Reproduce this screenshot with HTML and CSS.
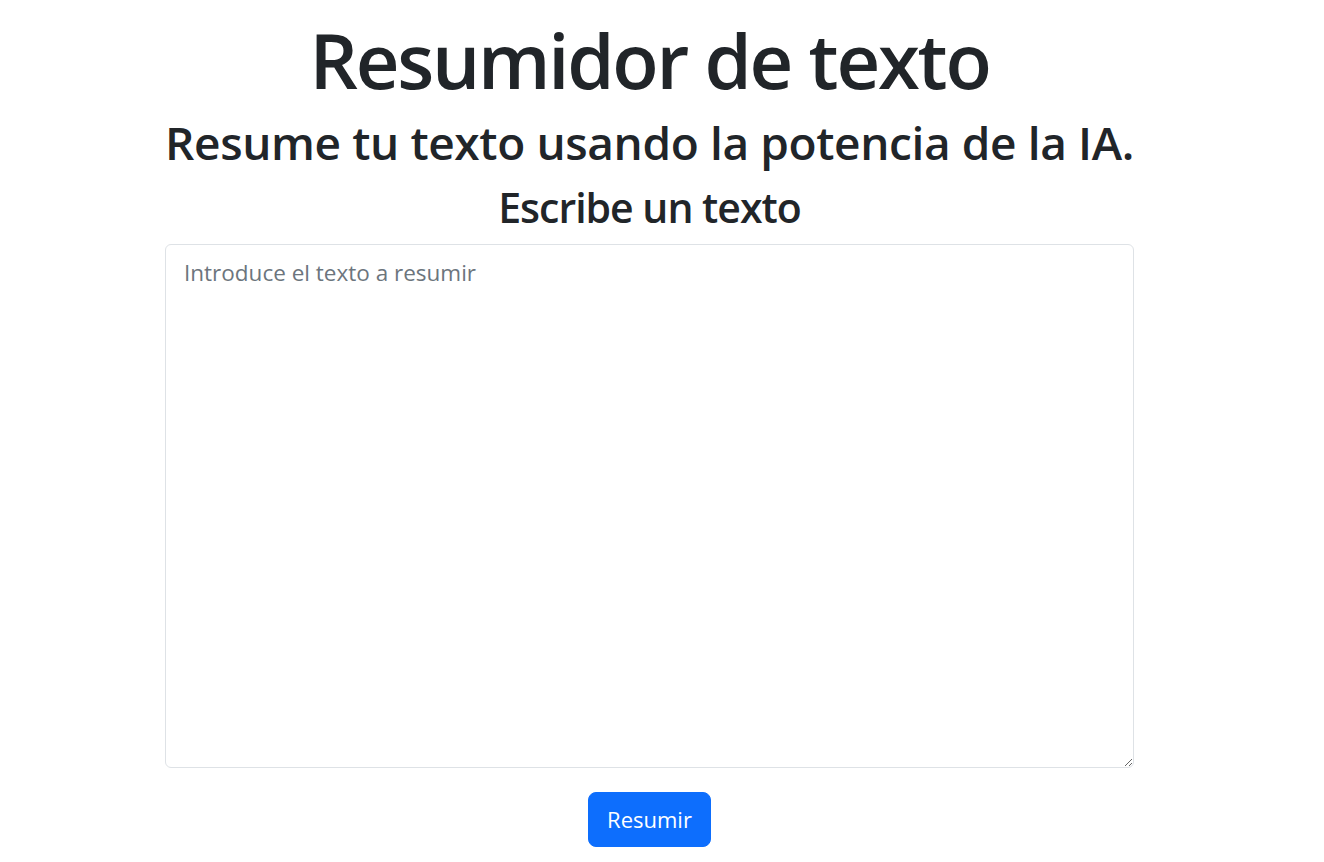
FILE: index.html
```html
<!DOCTYPE html>
<html lang="es">
<head>
<meta charset="utf-8">
<title>Resumidor de texto</title>
<link rel="stylesheet" href="styles.css">
</head>
<body>
<main class="page">
  <h1 class="title">Resumidor de texto</h1>
  <h2 class="subtitle">Resume tu texto usando la potencia de la IA.</h2>
  <form class="form">
    <label class="label" for="texto">Escribe un texto</label>
    <textarea id="texto" class="textarea" placeholder="Introduce el texto a resumir"></textarea>
    <button type="button" class="btn">Resumir</button>
  </form>
</main>
</body>
</html>
```

FILE: styles.css
```css
* { box-sizing: border-box; }
html, body { margin: 0; padding: 0; background: #fff; }
body {
  font-family: "Open Sans", "Noto Sans", sans-serif;
  color: #212529;
}
.page {
  width: 969px;
  margin-left: 165px;
  display: flex;
  flex-direction: column;
  align-items: center;
  padding-top: 12px;
}
.title {
  margin: 0 0 6px;
  font-size: 76px;
  font-weight: 600;
  letter-spacing: -2.25px;
  line-height: 96px;
  white-space: nowrap;
}
.subtitle {
  margin: 0 0 11px;
  font-size: 46px;
  font-weight: 600;
  letter-spacing: -0.38px;
  line-height: 56px;
  white-space: nowrap;
}
.form {
  width: 100%;
  display: flex;
  flex-direction: column;
  align-items: center;
}
.label {
  font-size: 41px;
  font-weight: 600;
  letter-spacing: -1px;
  line-height: 52px;
  margin-bottom: 11px;
  white-space: nowrap;
}
.textarea {
  display: block;
  width: 100%;
  height: 524px;
  border: 1px solid #dee2e6;
  border-radius: 6px;
  padding: 11px 18px;
  font-family: inherit;
  font-size: 22.5px;
  line-height: 1.5;
  color: #212529;
  resize: vertical;
}
.textarea::placeholder { color: #6c757d; opacity: 1; }
.btn {
  margin-top: 24px;
  background: #0d6efd;
  color: #fff;
  border: 1px solid #0d6efd;
  border-radius: 8px;
  padding: 10px 18.5px;
  font-family: inherit;
  font-size: 22px;
  line-height: 33px;
}
```
